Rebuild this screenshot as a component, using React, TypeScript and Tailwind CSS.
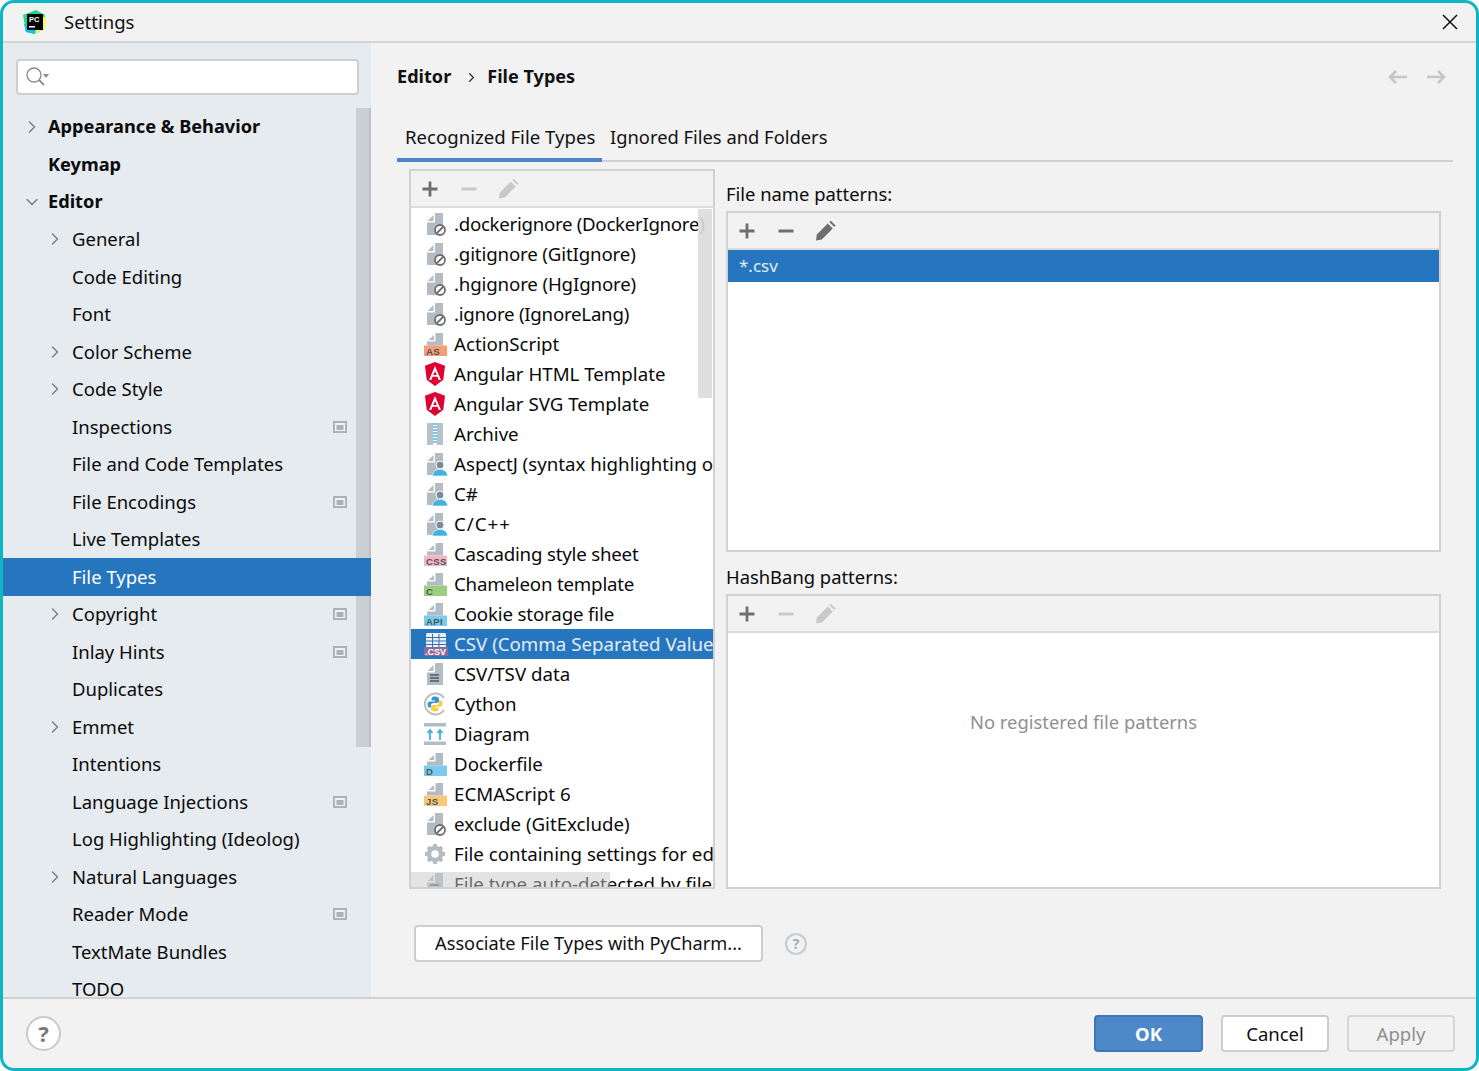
import { ReactNode } from "react";
import { ChevronDown, ChevronRight } from "lucide-react";

const font = "font-['Noto_Sans','Open_Sans',sans-serif]";

type TreeItem = { label: string; level: 0 | 1; arrow?: "right" | "down"; bold?: boolean; badge?: boolean; active?: boolean };

const TREE: TreeItem[] = [
  { label: "Appearance & Behavior", level: 0, arrow: "right", bold: true },
  { label: "Keymap", level: 0, bold: true },
  { label: "Editor", level: 0, arrow: "down", bold: true },
  { label: "General", level: 1, arrow: "right" },
  { label: "Code Editing", level: 1 },
  { label: "Font", level: 1 },
  { label: "Color Scheme", level: 1, arrow: "right" },
  { label: "Code Style", level: 1, arrow: "right" },
  { label: "Inspections", level: 1, badge: true },
  { label: "File and Code Templates", level: 1 },
  { label: "File Encodings", level: 1, badge: true },
  { label: "Live Templates", level: 1 },
  { label: "File Types", level: 1, active: true },
  { label: "Copyright", level: 1, arrow: "right", badge: true },
  { label: "Inlay Hints", level: 1, badge: true },
  { label: "Duplicates", level: 1 },
  { label: "Emmet", level: 1, arrow: "right" },
  { label: "Intentions", level: 1 },
  { label: "Language Injections", level: 1, badge: true },
  { label: "Log Highlighting (Ideolog)", level: 1 },
  { label: "Natural Languages", level: 1, arrow: "right" },
  { label: "Reader Mode", level: 1, badge: true },
  { label: "TextMate Bundles", level: 1 },
  { label: "TODO", level: 1 },
];

type IconKind = "ignore" | "person" | "text" | "angular" | "archive" | "csv" | "python" | "diagram" | "gear" | "badge";
type FileType = { label: string; icon: IconKind; tag?: string; tagBg?: string; active?: boolean; tight?: string };

const FILE_TYPES: FileType[] = [
  { label: ".dockerignore (DockerIgnore)", icon: "ignore", tight: "tracking-[-0.3px]" },
  { label: ".gitignore (GitIgnore)", icon: "ignore", tight: "tracking-[-0.15px]" },
  { label: ".hgignore (HgIgnore)", icon: "ignore", tight: "tracking-[-0.15px]" },
  { label: ".ignore (IgnoreLang)", icon: "ignore", tight: "tracking-[-0.25px]" },
  { label: "ActionScript", icon: "badge", tag: "AS", tagBg: "#f59d73" },
  { label: "Angular HTML Template", icon: "angular" },
  { label: "Angular SVG Template", icon: "angular" },
  { label: "Archive", icon: "archive" },
  { label: "AspectJ (syntax highlighting only)", icon: "person" },
  { label: "C#", icon: "person" },
  { label: "C/C++", icon: "person", tight: "tracking-[1px]" },
  { label: "Cascading style sheet", icon: "badge", tag: "CSS", tagBg: "#f7b5c1", tight: "tracking-[-0.2px]" },
  { label: "Chameleon template", icon: "badge", tag: "C", tagBg: "#9bce7f", tight: "tracking-[-0.2px]" },
  { label: "Cookie storage file", icon: "badge", tag: "API", tagBg: "#7ccbeb", tight: "tracking-[-0.15px]" },
  { label: "CSV (Comma Separated Values)", icon: "csv", active: true },
  { label: "CSV/TSV data", icon: "text" },
  { label: "Cython", icon: "python" },
  { label: "Diagram", icon: "diagram" },
  { label: "Dockerfile", icon: "badge", tag: "D", tagBg: "#7ccbeb" },
  { label: "ECMAScript 6", icon: "badge", tag: "JS", tagBg: "#f8c878" },
  { label: "exclude (GitExclude)", icon: "ignore" },
  { label: "File containing settings for editors", icon: "gear" },
  { label: "File type auto-detected by file content", icon: "text" },
];

function Sheet() {
  return <path d="M3.500 9 9.500 3v6h-6ZM11 1h8v22H3V10.500h8V1Z" fill="#b3bcc4" />;
}

function TypeIcon({ item }: { item: FileType }) {
  const { icon, tag, tagBg } = item;
  return (
    <svg width="24" height="24" viewBox="0 0 24 24" className="shrink-0">
      {icon === "ignore" && (
        <>
          <Sheet />
          <circle cx="16" cy="18" r="5" fill="#fff" stroke="#6e6e6e" strokeWidth="1.800" />
          <path d="m12.500 21.500 7-7" stroke="#6e6e6e" strokeWidth="1.800" />
        </>
      )}
      {icon === "person" && (
        <>
          <Sheet />
          <circle cx="16" cy="13" r="4" fill="#7d8a94" stroke="#fff" />
          <path d="M8.500 24c0-4.500 3.500-6.500 7.500-6.500s7.500 2 7.500 6.500H8.500Z" fill="#3fb2e2" stroke="#fff" strokeWidth="0.600" />
        </>
      )}
      {icon === "badge" && (
        <>
          <path d="M4.500 8 10 3v5H4.500ZM11.500 1H19v12.500H3V9.500h8.500V1Z" fill="#b3bcc4" />
          <rect x="0" y="13.500" width="23" height="10.500" fill={tagBg} />
          <text x="2" y="22.500" fontSize="9.500" fontWeight="700" letterSpacing="0.400" fill="#465660" fontFamily="'Liberation Sans',sans-serif">
            {tag}
          </text>
        </>
      )}
      {icon === "angular" && (
        <>
          <path d="M11 0 1 3.800l1.700 14L11 24l8.300-6.200 1.700-14L11 0Z" fill="#dd0031" />
          <path d="M11 4 5 18h2.300l1.200-3.200h5l1.200 3.200H17L11 4Zm0 5.200 1.800 3.800H9.200L11 9.200Z" fill="#fff" />
        </>
      )}
      {icon === "archive" && (
        <>
          <rect x="3" y="1" width="16" height="22" fill="#b9c2c9" />
          <rect x="9" y="1" width="4" height="22" fill="#fff" />
          <path d="M9 2h4M9 5h4M9 8h4M9 11h4M9 14h4M9 17h4M9 20h4" stroke="#4db5e3" strokeWidth="1.500" />
        </>
      )}
      {icon === "csv" && (
        <>
          <rect x="2" y="1" width="20" height="15" rx="1.500" fill="#f2eef5" />
          <path d="M2 5.500h20M2 9h20M2 12.500h20M8.500 2v13M15 2v13" stroke="#2675bf" strokeWidth="1" />
          <rect x="0" y="15" width="24" height="9" fill="#8a6a9c" />
          <text x="1" y="23" fontSize="9" fontWeight="700" fill="#fff" fontFamily="'Liberation Sans',sans-serif">.CSV</text>
        </>
      )}
      {icon === "text" && (
        <>
          <Sheet />
          <path d="M6 13h9M6 16h9M6 19h9" stroke="#4e5a62" strokeWidth="1.600" />
        </>
      )}
      {icon === "python" && (
        <>
          <path d="M20 6A10.500 10.500 0 1 0 20 18" fill="none" stroke="#b6bec5" strokeWidth="2" />
          <circle cx="11" cy="12" r="8" fill="#fff" />
          <path d="M11 4.500c-3 0-3.500 1.200-3.500 2.500v1.500H11v1H5.500C4 9.500 3.500 11 3.500 12.500S4 15.500 5.500 15.500H7V13.500c0-1.500 1-2.500 2.500-2.500H13c1 0 2-.8 2-2V7c0-1.500-1.500-2.500-4-2.500Z" fill="#3f93d1" />
          <path d="M11 19.500c3 0 3.500-1.200 3.500-2.500v-1.500H11v-1h5.500c1.500 0 2-1.500 2-3s-.5-3-2-3H15v2c0 1.500-1 2.500-2.500 2.500H9c-1 0-2 .8-2 2V17c0 1.500 1.500 2.500 4 2.500Z" fill="#fbcf3c" />
        </>
      )}
      {icon === "diagram" && (
        <>
          <rect x="0" y="1" width="22" height="3.500" fill="#b3bcc4" />
          <rect x="0" y="19.500" width="22" height="3.500" fill="#b3bcc4" />
          <path d="M6 18V8M16 18V8M3.500 11 6 8l2.500 3M13.500 11 16 8l2.500 3" fill="none" stroke="#3fb2e2" strokeWidth="1.800" />
        </>
      )}
      {icon === "gear" && (
        <>
          <circle cx="11" cy="12" r="6" fill="none" stroke="#b3bcc4" strokeWidth="4.500" />
          <path d="M11 2v4M11 18v4M1 12h4M17 12h4M4 5l3 3M15 16l3 3M18 5l-3 3M7 16l-3 3" stroke="#b3bcc4" strokeWidth="3.800" />
        </>
      )}
    </svg>
  );
}

function Tools({ muted = false }: { muted?: boolean }) {
  const strong = "#6e6e6e";
  const soft = muted ? "#c9c9c9" : strong;
  return (
    <div className="h-[37px] flex items-center gap-[15px] pl-[7px] bg-[#f2f2f2] border-b-2 border-[#dcdcdc] shrink-0">
      <svg width="24" height="24" viewBox="0 0 24 24">
        <path d="M12 4.500v15M4.500 12h15" stroke={strong} strokeWidth="2.800" />
      </svg>
      <svg width="24" height="24" viewBox="0 0 24 24">
        <path d="M4.500 12h15" stroke={soft} strokeWidth="2.800" />
      </svg>
      <svg width="24" height="24" viewBox="0 0 24 24">
        <path d="m3 21.500.8-6L14.800 4.500l5 5L8.800 20.500l-5.800 1ZM16.300 3l1.500-1.300 4.800 4.800-1.300 1.500L16.300 3Z" fill={soft} />
      </svg>
    </div>
  );
}

function Box({ children, className = "" }: { children: ReactNode; className?: string }) {
  return <div className={`border-2 border-[#d1d1d1] bg-white flex flex-col overflow-hidden ${className}`}>{children}</div>;
}

function SideBadge() {
  return (
    <svg width="14" height="12" viewBox="0 0 14 12" className="shrink-0">
      <rect width="14" height="12" fill="#a9b3bb" />
      <rect x="2" y="2" width="10" height="8" fill="#f0f2f4" />
      <rect x="3.500" y="4" width="7" height="5" fill="#a9b3bb" />
    </svg>
  );
}

function Sidebar() {
  return (
    <aside className="w-[368px] shrink-0 bg-[#e6ebf0] flex flex-col relative overflow-hidden">
      <div className="absolute right-0 top-[65px] w-[15px] h-[639px] bg-[#cbcfd4] border-r-[2px] border-[#bcc0c5]" />
      <div className="relative ml-[13px] mt-[16px] w-[343px] h-9 bg-white border-2 border-[#cdd0d3] rounded-[4px] flex items-center pl-[7px] shrink-0">
        <svg width="26" height="22" viewBox="0 0 26 22">
          <circle cx="9" cy="9" r="7" fill="none" stroke="#8c8c8c" strokeWidth="1.400" />
          <path d="m14 14 5 5" stroke="#8c8c8c" strokeWidth="1.800" />
          <path d="m18 8 6 0-3 4Z" fill="#8c8c8c" />
        </svg>
      </div>
      <div className="relative mt-[13px]">
        {TREE.map((t) => (
          <div
            key={t.label}
            className={`h-[37.5px] flex items-center pr-[24px] ${t.active ? "bg-[#2675bf] text-white" : "text-[#0a0a0a]"}`}
          >
            <span className={`flex items-center justify-center w-5 shrink-0 ${t.level === 0 ? "ml-[19px]" : "ml-[42px]"}`}>
              {t.arrow === "right" && <ChevronRight size={20} strokeWidth={1.600} color="#7a7a7a" />}
              {t.arrow === "down" && <ChevronDown size={22} strokeWidth={1.600} color="#7a7a7a" />}
            </span>
            <span className={`flex-1 whitespace-nowrap ${t.bold ? "ml-[6px] text-[18.200px] font-bold" : "ml-[7px] text-[18.500px]"}`}>{t.label}</span>
            {t.badge && <SideBadge />}
          </div>
        ))}
      </div>
    </aside>
  );
}

function FileTypeList() {
  return (
    <Box className="w-[306px] shrink-0 relative">
      <Tools muted />
      <div className="pt-[1px] overflow-hidden flex-1">
        {FILE_TYPES.map((f) => (
          <div
            key={f.label}
            className={`h-[30px] flex items-center gap-[6px] pl-[13px] whitespace-nowrap text-[18.700px] ${f.active ? "bg-[#2675bf] text-[#e4edf6]" : "text-[#0a0a0a]"}`}
          >
            <TypeIcon item={f} />
            <span className={f.tight}>{f.label}</span>
          </div>
        ))}
      </div>
      <div className="absolute right-[1px] top-[38px] w-[14px] h-[189px] bg-[#dcdcdc]/90" />
      <div className="absolute left-0 bottom-0 w-[199px] h-[15px] bg-[#c8c8c8]/50" />
    </Box>
  );
}

function Patterns() {
  return (
    <div className="flex-1 flex flex-col text-[#0a0a0a] text-[18.400px] min-w-0">
      <div className="h-[42px] pt-[8px] flex items-center">File name patterns:</div>
      <Box className="h-[341px]">
        <Tools />
        <div className="h-8 bg-[#2675bf] text-[#e4edf6] flex items-center pl-[11px] text-[17px]">*.csv</div>
      </Box>
      <div className="h-[42px] pt-[8px] flex items-center">HashBang patterns:</div>
      <Box className="flex-1">
        <Tools muted />
        <div className="flex-1 flex items-center justify-center pb-[76px] text-[#8f8f8f]">No registered file patterns</div>
      </Box>
    </div>
  );
}

export default function App() {
  return (
    <div className={`w-[1479px] h-[1071px] bg-white ${font} overflow-hidden`}>
      <div className="w-full h-full border-[3px] border-[#0fb5c2] rounded-[14px] bg-[#f2f2f2] flex flex-col overflow-hidden">
        <header className="h-[40px] shrink-0 flex items-center border-b-[2px] border-[#d4d4d4] pl-[18px] pr-[18px] text-[#111] text-[18.500px]">
          <svg width="26" height="26" viewBox="0 0 26 26" className="shrink-0">
            <path d="M2 6 15 1l9 5-1 14-9 5-9-2Z" fill="#21d789" />
            <path d="M16 8h9l-1 11-10 6Z" fill="#fcf84a" />
            <path d="M3 15h12l-1 10-9-2Z" fill="#07c3f2" />
            <rect x="6" y="5" width="16" height="16" fill="#000" />
            <text x="8" y="13" fontSize="7.500" fontWeight="700" fill="#fff" fontFamily="'Liberation Sans',sans-serif">PC</text>
            <rect x="8" y="17" width="6" height="1.500" fill="#fff" />
          </svg>
          <span className="ml-[17px]">Settings</span>
          <svg width="18" height="18" viewBox="0 0 18 18" className="ml-auto mr-[-1px]">
            <path d="m2 2 14 14M16 2 2 16" stroke="#111" strokeWidth="1.500" />
          </svg>
        </header>

        <main className="flex-1 flex min-h-0">
          <Sidebar />
          <section className="flex-1 min-w-0 flex flex-col pl-[26px] pr-[23px]">
            <div className="h-[68px] shrink-0 flex items-center text-[#111] text-[18.100px] font-bold">
              <span>Editor</span>
              <ChevronRight size={15} strokeWidth={2} className="ml-[13px] mr-[8px]" color="#333" />
              <span>File Types</span>
              <span className="ml-auto flex gap-[20px] mr-[6px]">
                <svg width="20" height="16" viewBox="0 0 20 16">
                  <path d="M20 8H3M9 2 3 8l6 6" fill="none" stroke="#c6c6c6" strokeWidth="2.600" />
                </svg>
                <svg width="20" height="16" viewBox="0 0 20 16">
                  <path d="M0 8h17M11 2l6 6-6 6" fill="none" stroke="#c6c6c6" strokeWidth="2.600" />
                </svg>
              </span>
            </div>
            <div className="h-[51px] shrink-0 flex items-stretch border-b-[2px] border-[#d1d1d1] text-[#111] text-[18.600px]">
              <div className="relative w-[205px] flex items-center pl-[8px] pt-[2px] whitespace-nowrap">
                Recognized File Types
                <div className="absolute left-0 right-0 -bottom-[2px] h-1 bg-[#4a86c8]" />
              </div>
              <div className="flex items-center pl-[8px] pt-[2px] text-[18.350px]">Ignored Files and Folders</div>
            </div>
            <div className="mt-[7px] ml-[12px] h-[720px] shrink-0 flex gap-[11px] w-[1032px]">
              <FileTypeList />
              <Patterns />
            </div>
            <div className="flex-1 flex items-center ml-[17px] gap-[22px] pt-[1px]">
              <button className="h-[37px] w-[349px] bg-white border-2 border-[#cdcdcd] rounded-[4px] text-[#111] text-[18.200px]">
                Associate File Types with PyCharm...
              </button>
              <span className="w-[22px] h-[22px] rounded-full border-2 border-[#c2ccd4] text-[#a3adb5] text-[14px] font-bold flex items-center justify-center">?</span>
            </div>
          </section>
        </main>

        <footer className="h-[71px] shrink-0 border-t-[2px] border-[#d1d1d1] flex items-center pl-[23px] pr-[21px]">
          <span className="w-[35px] h-[35px] rounded-full bg-white border-2 border-[#c9c9c9] text-[#777] text-[22px] font-bold flex items-center justify-center">?</span>
          <button className="ml-auto w-[109px] h-[37px] rounded-[4px] bg-[#4d88c9] border-2 border-[#3e78b8] text-white text-[18.500px] font-bold">OK</button>
          <button className="ml-[18px] w-[108px] h-[37px] rounded-[4px] bg-white border-2 border-[#cdcdcd] text-[#111] text-[18.500px]">Cancel</button>
          <button className="ml-[18px] w-[108px] h-[37px] rounded-[4px] bg-[#f2f2f2] border-2 border-[#d6d6d6] text-[#8f8f8f] text-[18.500px]">Apply</button>
        </footer>
      </div>
    </div>
  );
}
